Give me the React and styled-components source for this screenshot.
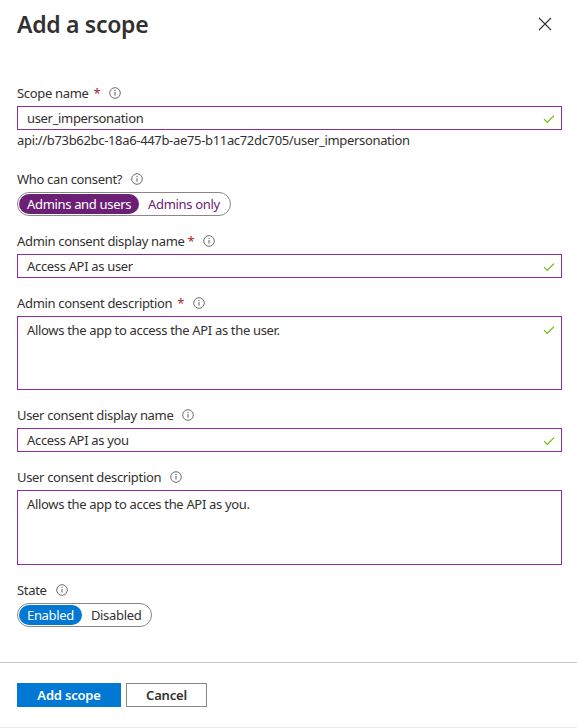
import React from 'react';
import styled, { createGlobalStyle } from 'styled-components';

const GlobalStyle = createGlobalStyle`
  html, body {
    margin: 0;
    padding: 0;
    background: #fff;
  }
  body {
    font-family: "Noto Sans", "Open Sans", sans-serif;
    color: #323130;
    letter-spacing: -0.33px;
  }
`;

const Panel = styled.div`
  width: 577px;
  height: 728px;
  display: flex;
  flex-direction: column;
  box-sizing: border-box;
  border-bottom: 1px solid #edebe9;
`;

const Header = styled.div`
  display: flex;
  justify-content: space-between;
  align-items: center;
  padding: 7px 24px 0 17px;
  height: 34px;
`;

const Title = styled.h1`
  margin: 0;
  font-size: 23px;
  font-weight: 600;
  color: #323130;
  letter-spacing: -0.3px;
`;

const CloseButton = styled.button`
  border: none;
  background: none;
  padding: 0;
  width: 16px;
  height: 16px;
  display: flex;
  align-items: center;
  justify-content: center;
  cursor: pointer;
`;

const Body = styled.div`
  flex: 1;
  padding: 42px 15px 0 17px;
`;

const Group = styled.div`
  margin-bottom: ${p => p.$gap || 15}px;
`;

const LabelRow = styled.div`
  display: flex;
  align-items: center;
  height: 20px;
  margin-bottom: 3px;
  font-size: 13px;
  color: #323130;
`;

const Star = styled.span`
  color: #a4262c;
  margin-left: ${p => (p.$tight ? 3 : 5)}px;
`;

const InfoWrap = styled.span`
  display: inline-flex;
  margin-left: 9px;
`;

const Field = styled.div`
  position: relative;
  box-sizing: border-box;
  height: ${p => p.$height}px;
  border: 1px solid #8a2ba0;
  padding: ${p => (p.$multi ? '4px 9px' : '0 9px')};
  display: flex;
  align-items: ${p => (p.$multi ? 'flex-start' : 'center')};
  font-size: 13px;
  color: #323130;
`;

const Check = styled.span`
  position: absolute;
  right: 6px;
  top: ${p => (p.$multi ? '8px' : '7px')};
  display: flex;
`;

const Hint = styled.div`
  font-size: 13px;
  line-height: 18px;
  margin-top: 1px;
  color: #323130;
`;

const Toggle = styled.div`
  display: inline-flex;
  align-items: center;
  box-sizing: border-box;
  height: 24px;
  border: 1px solid #8a8886;
  border-radius: 12px;
  padding: 1px;
`;

const Segment = styled.span`
  height: 20px;
  box-sizing: border-box;
  padding: 0 ${p => p.$pad || 9}px;
  display: flex;
  align-items: center;
  border-radius: 10px;
  font-size: 13px;
  background: ${p => (p.$active ? p.$color : 'transparent')};
  color: ${p => (p.$active ? '#fff' : p.$text)};
`;

const Footer = styled.div`
  border-top: 1px solid #c8c6c4;
  height: 65px;
  padding: 20px 0 0 17px;
  display: flex;
  gap: 5px;
  box-sizing: border-box;
`;

const Button = styled.button`
  height: 24px;
  box-sizing: border-box;
  width: ${p => p.$width}px;
  font-family: inherit;
  letter-spacing: -0.2px;
  font-size: 13px;
  font-weight: 600;
  border: 1px solid ${p => (p.$primary ? '#0078d4' : '#8a8886')};
  background: ${p => (p.$primary ? '#0078d4' : '#fff')};
  color: ${p => (p.$primary ? '#fff' : '#323130')};
  padding: 0;
  cursor: pointer;
`;

const InfoIcon = () => (
  <svg width="12" height="12" viewBox="0 0 12 12">
    <circle cx="6" cy="6" r="5.3" fill="none" stroke="#605e5c" strokeWidth="0.9" />
    <line x1="6" y1="5" x2="6" y2="8.6" stroke="#605e5c" strokeWidth="1" />
    <circle cx="6" cy="3.4" r="0.6" fill="#605e5c" />
  </svg>
);

const CheckIcon = () => (
  <svg width="12" height="10" viewBox="0 0 12 10">
    <path d="M1 5.2 L4.2 8.4 L11 1.6" fill="none" stroke="#6bb700" strokeWidth="1.1" />
  </svg>
);

const CloseIcon = () => (
  <svg width="14" height="14" viewBox="0 0 14 14">
    <path d="M1 1 L13 13 M13 1 L1 13" stroke="#323130" strokeWidth="1.1" />
  </svg>
);

const Label = ({ children, required, tight }) => (
  <LabelRow>
    {children}
    {required && <Star $tight={tight}>*</Star>}
    <InfoWrap>
      <InfoIcon />
    </InfoWrap>
  </LabelRow>
);

const Input = ({ value, height = 24, multi, valid = true }) => (
  <Field $height={height} $multi={multi}>
    {value}
    {valid && (
      <Check $multi={multi}>
        <CheckIcon />
      </Check>
    )}
  </Field>
);

export default function App() {
  return (
    <>
      <GlobalStyle />
      <Panel>
        <Header>
          <Title>Add a scope</Title>
          <CloseButton aria-label="Close">
            <CloseIcon />
          </CloseButton>
        </Header>
        <Body>
          <Group $gap={20}>
            <Label required>Scope name</Label>
            <Input value="user_impersonation" />
            <Hint>api://b73b62bc-18a6-447b-ae75-b11ac72dc705/user_impersonation</Hint>
          </Group>
          <Group>
            <Label>Who can consent?</Label>
            <Toggle>
              <Segment $active $color="#6b2076" $pad={8}>Admins and users</Segment>
              <Segment $text="#6b2076" $pad={9}>Admins only</Segment>
            </Toggle>
          </Group>
          <Group>
            <Label required tight>Admin consent display name</Label>
            <Input value="Access API as user" />
          </Group>
          <Group>
            <Label required>Admin consent description</Label>
            <Input multi height={74} value="Allows the app to access the API as the user." />
          </Group>
          <Group>
            <Label>User consent display name</Label>
            <Input value="Access API as you" />
          </Group>
          <Group>
            <Label>User consent description</Label>
            <Input multi height={75} valid={false} value="Allows the app to acces the API as you." />
          </Group>
          <Group>
            <Label>State</Label>
            <Toggle>
              <Segment $active $color="#0078d4" $pad={8}>Enabled</Segment>
              <Segment $text="#323130" $pad={9}>Disabled</Segment>
            </Toggle>
          </Group>
        </Body>
        <Footer>
          <Button $primary $width={104}>Add scope</Button>
          <Button $width={81}>Cancel</Button>
        </Footer>
      </Panel>
    </>
  );
}
